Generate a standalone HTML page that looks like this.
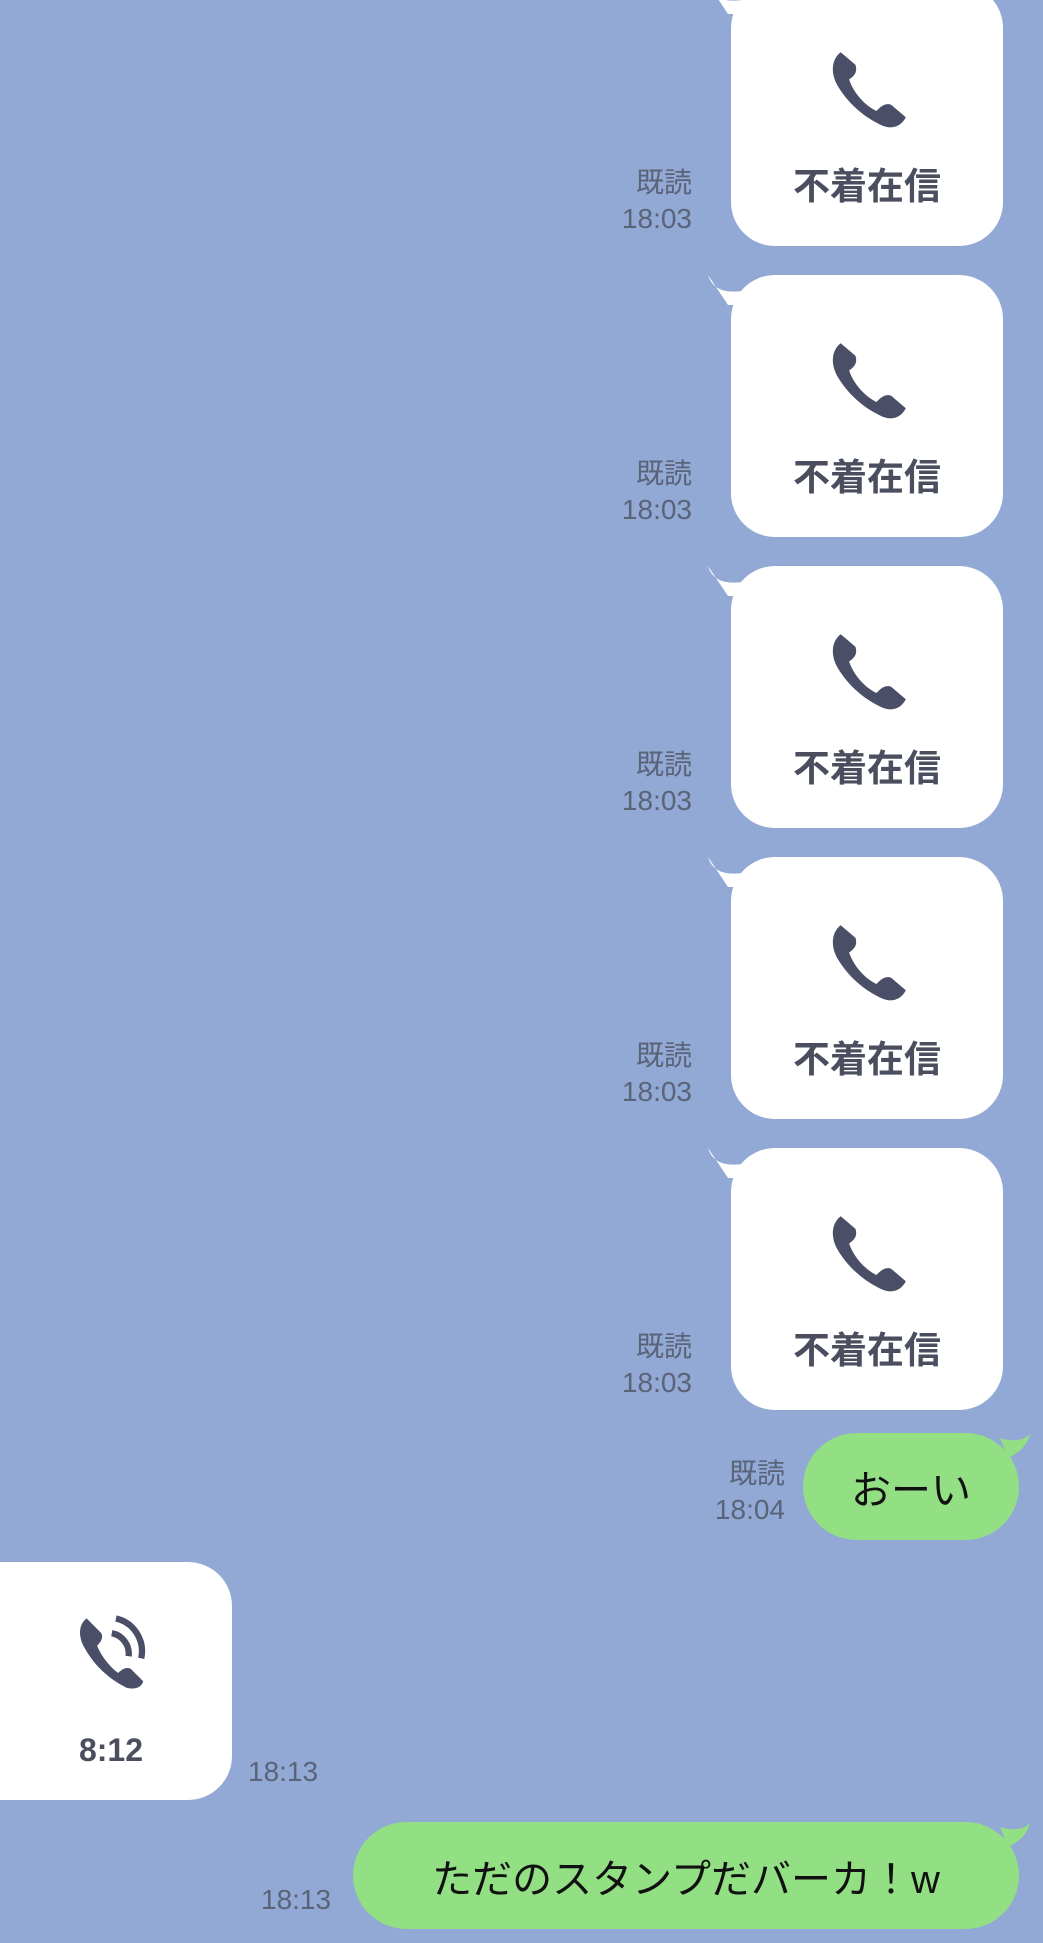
<!DOCTYPE html>
<html><head><meta charset="utf-8"><style>
body{margin:0;width:1043px;height:1943px;overflow:hidden;background:#91a9d4;font-family:"Liberation Sans","Noto Sans CJK JP",sans-serif;position:relative}
.b{position:absolute;background:#fff;border-radius:44px}
.w{left:731px;width:272px;height:262px}
.tail{position:absolute;width:40px;height:30px}
.t{position:absolute;color:#4a4e5e;font-weight:bold;font-size:37px;width:100%;text-align:center;top:172px}
.ico{position:absolute;left:94px;top:64px}
.meta{position:absolute;color:#5a6378;font-size:28px;text-align:right;line-height:36px}
.g{position:absolute;background:#93df84;border-radius:54px;font-size:40px;color:#111;display:flex;align-items:center;justify-content:center}
</style></head><body>

<svg class="tail" style="left:708px;top:-16px" viewBox="0 0 40 30"><path d="M0 0 Q6 20 34 16 L40 30 L20 30 Z" fill="#fff"/></svg>
<div class="b w" style="top:-16px"><svg class="ico" width="86" height="84" viewBox="0 0 80 80"><path d="M14 4 C6 10 4 22 10 34 C20 52 36 66 54 74 C64 78 72 74 76 66 L62 54 C56 52 52 56 48 60 C36 54 26 42 22 30 C28 26 30 22 28 16 Z" fill="#4a4e66"/></svg><div class="t">不着在信</div></div>
<div class="meta" style="right:351px;top:165px">既読<br>18:03</div>

<svg class="tail" style="left:708px;top:275px" viewBox="0 0 40 30"><path d="M0 0 Q6 20 34 16 L40 30 L20 30 Z" fill="#fff"/></svg>
<div class="b w" style="top:275px"><svg class="ico" width="86" height="84" viewBox="0 0 80 80"><path d="M14 4 C6 10 4 22 10 34 C20 52 36 66 54 74 C64 78 72 74 76 66 L62 54 C56 52 52 56 48 60 C36 54 26 42 22 30 C28 26 30 22 28 16 Z" fill="#4a4e66"/></svg><div class="t">不着在信</div></div>
<div class="meta" style="right:351px;top:456px">既読<br>18:03</div>

<svg class="tail" style="left:708px;top:566px" viewBox="0 0 40 30"><path d="M0 0 Q6 20 34 16 L40 30 L20 30 Z" fill="#fff"/></svg>
<div class="b w" style="top:566px"><svg class="ico" width="86" height="84" viewBox="0 0 80 80"><path d="M14 4 C6 10 4 22 10 34 C20 52 36 66 54 74 C64 78 72 74 76 66 L62 54 C56 52 52 56 48 60 C36 54 26 42 22 30 C28 26 30 22 28 16 Z" fill="#4a4e66"/></svg><div class="t">不着在信</div></div>
<div class="meta" style="right:351px;top:747px">既読<br>18:03</div>

<svg class="tail" style="left:708px;top:857px" viewBox="0 0 40 30"><path d="M0 0 Q6 20 34 16 L40 30 L20 30 Z" fill="#fff"/></svg>
<div class="b w" style="top:857px"><svg class="ico" width="86" height="84" viewBox="0 0 80 80"><path d="M14 4 C6 10 4 22 10 34 C20 52 36 66 54 74 C64 78 72 74 76 66 L62 54 C56 52 52 56 48 60 C36 54 26 42 22 30 C28 26 30 22 28 16 Z" fill="#4a4e66"/></svg><div class="t">不着在信</div></div>
<div class="meta" style="right:351px;top:1038px">既読<br>18:03</div>

<svg class="tail" style="left:708px;top:1148px" viewBox="0 0 40 30"><path d="M0 0 Q6 20 34 16 L40 30 L20 30 Z" fill="#fff"/></svg>
<div class="b w" style="top:1148px"><svg class="ico" width="86" height="84" viewBox="0 0 80 80"><path d="M14 4 C6 10 4 22 10 34 C20 52 36 66 54 74 C64 78 72 74 76 66 L62 54 C56 52 52 56 48 60 C36 54 26 42 22 30 C28 26 30 22 28 16 Z" fill="#4a4e66"/></svg><div class="t">不着在信</div></div>
<div class="meta" style="right:351px;top:1329px">既読<br>18:03</div>

<div class="g" style="left:803px;top:1433px;width:216px;height:107px">おーい</div>
<svg class="tail" style="left:1000px;top:1434px" viewBox="0 0 40 30"><path d="M0 4 Q20 10 30 0 Q26 16 8 24 Z" fill="#93df84"/></svg>
<div class="meta" style="right:258px;top:1456px">既読<br>18:04</div>

<div class="b" style="left:-44px;top:1562px;width:276px;height:238px"></div>
<svg style="position:absolute;left:74px;top:1610px" width="84" height="84" viewBox="0 0 80 80"><path d="M12 8 C4 14 4 26 10 36 C20 54 34 66 50 74 C58 76 64 74 66 68 L54 56 C50 54 46 56 42 60 C34 54 26 44 22 34 C26 30 28 26 26 22 Z" fill="#4a4e66"/><path d="M36 22 A20 20 0 0 1 52 44" stroke="#4a4e66" stroke-width="6" fill="none"/><path d="M40 8 A32 32 0 0 1 64 46" stroke="#4a4e66" stroke-width="6" fill="none"/></svg>
<div style="position:absolute;left:0;width:222px;text-align:center;top:1732px;font-size:32px;font-weight:bold;color:#4a4e5e">8:12</div>
<div class="meta" style="left:248px;top:1754px;text-align:left">18:13</div>

<div class="g" style="left:353px;top:1822px;width:666px;height:107px">ただのスタンプだバーカ！w</div>
<svg class="tail" style="left:1000px;top:1823px" viewBox="0 0 40 30"><path d="M0 4 Q20 10 30 0 Q26 16 8 24 Z" fill="#93df84"/></svg>
<div class="meta" style="left:261px;top:1882px;text-align:left">18:13</div>
</body></html>
